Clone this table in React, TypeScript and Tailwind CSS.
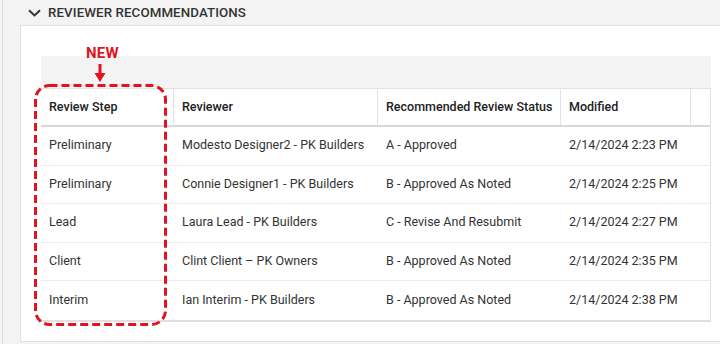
const columns = [
  { label: "Review Step", width: "w-[133px]" },
  { label: "Reviewer", width: "w-[204px]" },
  { label: "Recommended Review Status", width: "w-[183px]" },
  { label: "Modified", width: "w-[130px]" },
];

const rows = [
  ["Preliminary", "Modesto Designer2 - PK Builders", "A - Approved", "2/14/2024 2:23 PM"],
  ["Preliminary", "Connie Designer1 - PK Builders", "B - Approved As Noted", "2/14/2024 2:25 PM"],
  ["Lead", "Laura Lead - PK Builders", "C - Revise And Resubmit", "2/14/2024 2:27 PM"],
  ["Client", "Clint Client – PK Owners", "B - Approved As Noted", "2/14/2024 2:35 PM"],
  ["Interim", "Ian Interim - PK Builders", "B - Approved As Noted", "2/14/2024 2:38 PM"],
];

export default function App() {
  return (
    <div className="relative w-[720px] h-[344px] overflow-hidden bg-[#f3f3f3] pl-[2px] font-['Roboto','Liberation_Sans',sans-serif] text-[#333]">
      <div className="flex h-full flex-col border-l border-[#dadada]">
        {/* section header */}
        <div className="flex h-[25px] shrink-0 items-center gap-[7px] pl-[25px]">
          <svg width="13" height="8" viewBox="0 0 13 8" className="mt-[1px]">
            <path d="M1 1.2 L6.5 6.4 L12 1.2" fill="none" stroke="#333" strokeWidth="2" />
          </svg>
          <span className="text-[13.3px] font-medium tracking-[0.1px]">REVIEWER RECOMMENDATIONS</span>
        </div>

        {/* panel */}
        <div className="mb-[2px] ml-[17px] flex-1 border-l border-b border-t border-[#e2e2e2] bg-white pl-[20px] pr-[9px] pt-[30px]">
          <div className="h-[32px] bg-[#f3f3f3]" />
          <div className="border-r border-b-2 border-[#e0e0e0]">
            <div className="flex h-[39px] border-t border-[#e2e2e2] border-b-2 border-b-[#d8d8d8] text-[12.5px] font-medium text-[#222]">
              {columns.map((c) => (
                <div key={c.label} className={`${c.width} flex items-center border-r border-[#e2e2e2] pl-[8px]`}>
                  {c.label}
                </div>
              ))}
              <div className="flex-1" />
            </div>
            {rows.map((r, i) => (
              <div
                key={i}
                className={`flex h-[38.5px] text-[12.5px] ${i < rows.length - 1 ? "border-b border-[#ececec]" : ""}`}
              >
                {r.map((cell, j) => (
                  <div key={j} className={`${columns[j].width} flex items-center pl-[8px]`}>
                    {cell}
                  </div>
                ))}
              </div>
            ))}
          </div>
        </div>
      </div>

      {/* annotation overlay */}
      <div className="absolute left-[86px] top-[42px] text-[15px] font-bold tracking-[0.2px] text-[#e0141e]">NEW</div>
      <svg className="absolute left-0 top-0" width="720" height="344">
        <line x1="100" y1="64" x2="100" y2="74" stroke="#e0141e" strokeWidth="3" />
        <path d="M94.5 73 L105.5 73 L100 82 Z" fill="#e0141e" />
        <rect
          x="35.5"
          y="85.5"
          width="130"
          height="239"
          rx="14"
          fill="none"
          stroke="#e0141e"
          strokeWidth="3"
          strokeDasharray="8 4"
        />
      </svg>
    </div>
  );
}
